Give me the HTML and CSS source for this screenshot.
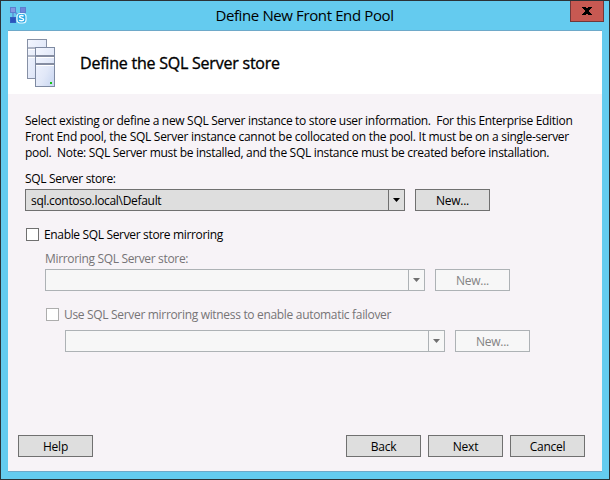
FILE: index.html
```html
<!DOCTYPE html>
<html lang="en">
<head>
<meta charset="utf-8">
<title>Define New Front End Pool</title>
<link rel="stylesheet" href="styles.css">
</head>
<body>
<div class="window">
  <header class="titlebar">
    <svg class="app-icon" width="17" height="17" viewBox="0 0 17 17">
      <path d="M3 5v8M4 4l4 4M13 4L8 8" stroke="#5f8fd6" stroke-width="1.5" fill="none"/>
      <rect x=".5" y=".5" width="5" height="5" fill="#8298e2" stroke="#5b7fd0"/>
      <rect x="10.500" y=".5" width="5" height="5" fill="#6f86da" stroke="#5b7fd0"/>
      <rect x=".5" y="10.500" width="5" height="5" fill="#2a55bd" stroke="#2f5fc0"/>
      <rect x="7" y="6.500" width="9" height="9.500" rx="3" fill="#29a9e6" stroke="#e6f7ff" stroke-width="1.200"/>
      <path d="M13.500 9.300c-.8-1.200-4-1.100-4 .5 0 1.700 4.100.9 4.100 2.700 0 1.700-3.500 1.600-4.300.3" fill="none" stroke="#fff" stroke-width="1.400"/>
    </svg>
    <h1 class="title">Define New Front End Pool</h1>
    <button class="close" aria-label="Close">
      <svg width="10" height="8" viewBox="0 0 10 8" shape-rendering="crispEdges"><path d="M0 0h4v1h2V0h4v1H9v1H8v1H7v2h1v1h1v1h1v1H6V7H4v1H0V7h1V6h1V5h1V3H2V2H1V1H0z" fill="#000"/></svg>
    </button>
  </header>
  <main class="client">
    <section class="banner">
      <svg class="servers" width="28" height="48" viewBox="0 0 28 48">
        <defs><linearGradient id="metal" x1="0" y1="0" x2="1" y2="1"><stop offset="0" stop-color="#f4f7ff"/><stop offset=".6" stop-color="#e1e8f8"/><stop offset="1" stop-color="#c6d4f0"/></linearGradient></defs>
        <rect x=".5" y=".5" width="19" height="39" fill="url(#metal)" stroke="#8690a5"/>
        <path d="M1 9h18M1 17h18" stroke="#9aa2b4" stroke-width="1.500"/><path d="M1 10.500h18M1 18.500h18" stroke="#fff"/>
        <rect x="8.500" y="8.500" width="19" height="39" fill="url(#metal)" stroke="#7e8aa2"/>
        <path d="M9 17h18M9 25h18" stroke="#858da1" stroke-width="1.800"/><path d="M9 18.500h18M9 26.500h18" stroke="#fff"/>
        <rect x="23" y="43" width="2" height="2" fill="#15c515"/>
      </svg>
      <h2 class="heading">Define the SQL Server store</h2>
    </section>
    <form class="form">
      <p class="intro">
        <span class="line line-a">Select existing or define a new SQL Server instance to store user information.&nbsp; For this Enterprise Edition</span>
        <span class="line line-b">Front End pool, the SQL Server instance cannot be collocated on the pool. It must be on a single-server</span>
        <span class="line line-c">pool.&nbsp; Note: SQL Server must be installed, and the SQL instance must be created before installation.</span>
      </p>
      <div class="label store-label">SQL Server store:</div>
      <div class="row">
        <div class="combo"><span class="value">sql.contoso.local\Default</span><span class="drop"><svg width="7" height="4" viewBox="0 0 7 4"><path d="M0 0h7L3.500 4z"/></svg></span></div>
        <button type="button" class="button">New...</button>
      </div>
      <div class="check enable"><span class="box"></span><span class="check-text enable-text">Enable SQL Server store mirroring</span></div>
      <div class="mirror disabled">
        <div class="label mirror-label">Mirroring SQL Server store:</div>
        <div class="row">
          <div class="combo"><span class="value"></span><span class="drop"><svg width="7" height="4" viewBox="0 0 7 4"><path d="M0 0h7L3.500 4z"/></svg></span></div>
          <button type="button" class="button" disabled>New...</button>
        </div>
        <div class="check witness"><span class="box"></span><span class="check-text witness-text">Use SQL Server mirroring witness to enable automatic failover</span></div>
        <div class="row witness-row">
          <div class="combo"><span class="value"></span><span class="drop"><svg width="7" height="4" viewBox="0 0 7 4"><path d="M0 0h7L3.500 4z"/></svg></span></div>
          <button type="button" class="button" disabled>New...</button>
        </div>
      </div>
    </form>
    <footer class="actions">
      <button class="button help">Help</button>
      <button class="button">Back</button>
      <button class="button">Next</button>
      <button class="button">Cancel</button>
    </footer>
  </main>
</div>
</body>
</html>
```

FILE: styles.css
```css
* { box-sizing: border-box; }
body { margin: 0; font: 12px/16px "Open Sans", "Noto Sans", sans-serif; color: #000; }
h1, h2, p { margin: 0; font-weight: 400; }
.window { width: 610px; height: 480px; border: 1px solid #2b3237; background: #64cbef; padding: 0 7px; }
.titlebar { height: 30px; display: grid; grid-template-columns: 34px 1fr 34px; align-items: start; margin-right: -2px; border-bottom: 1px solid transparent; }
.app-icon { margin: 6px 0 0 2px; }
.title { font-size: 15px; line-height: 29px; text-align: center; letter-spacing: -0.38px; white-space: nowrap; padding-right: 3px; }
.close { height: 21px; padding: 0; border: 1px solid #70383a; border-top: 0; background: #c75952; display: flex; justify-content: center; align-items: center; }
.client { height: 442px; margin-top: -1px; border-top: 1px solid #6ea9c9; border-bottom: 1px solid #6ea9c9; background: #f7f3f7; display: flex; flex-direction: column; }
.banner { height: 63px; background: #fff; display: flex; align-items: flex-start; padding: 8px 0 0 19px; }
.heading { font-size: 16px; line-height: 22px; -webkit-text-stroke: 0.35px #000; margin: 13px 0 0 25px; white-space: nowrap; letter-spacing: -0.22px; }
.form { flex: 1; padding: 19px 0 0 17px; }
.line { display: block; white-space: nowrap; }
.line-a { letter-spacing: -0.315px; }
.line-b { letter-spacing: -0.272px; }
.line-c { letter-spacing: -0.305px; }
.label { height: 16px; letter-spacing: -0.33px; white-space: nowrap; }
.store-label { margin: 10px 0 2px; }
.row { display: flex; gap: 10px; }
.combo { width: 380px; height: 22px; border: 1px solid #707070; background: #dedede; display: flex; }
.value { flex: 1; padding-left: 5px; line-height: 22px; letter-spacing: -0.31px; }
.drop { width: 16px; border-left: 1px solid #707070; display: flex; justify-content: center; padding-top: 8px; }
.drop svg { fill: #000; }
.button { width: 75px; height: 22px; padding: 1px 0 0; border: 1px solid #707070; background: #dedede; color: #000; font: inherit; line-height: 20px; letter-spacing: -0.25px; }
.check { display: flex; gap: 5px; height: 13px; align-items: center; margin-left: 1px; white-space: nowrap; }
.box { width: 13px; height: 13px; border: 1px solid #707070; background: #fff; }
.check-text { padding-top: 1px; letter-spacing: -0.32px; }
.enable { margin-top: 17px; }
.enable-text { letter-spacing: -0.34px; }
.mirror { padding-left: 20px; }
.mirror-label { margin: 10px 0 2px; }
.witness { margin-top: 17px; margin-bottom: 9px; }
.witness-row { padding-left: 20px; }
.disabled { color: #767476; }
.disabled .combo, .disabled .button { border-color: #adb2b5; background: #f7f7f7; color: #838383; }
.disabled .drop { border-color: #adb2b5; }
.disabled .drop svg { fill: #707070; }
.disabled .box { border-color: #adadad; }
.actions { display: flex; gap: 7px; padding: 0 17px 14px 10px; }
.help { margin-right: auto; }
```
